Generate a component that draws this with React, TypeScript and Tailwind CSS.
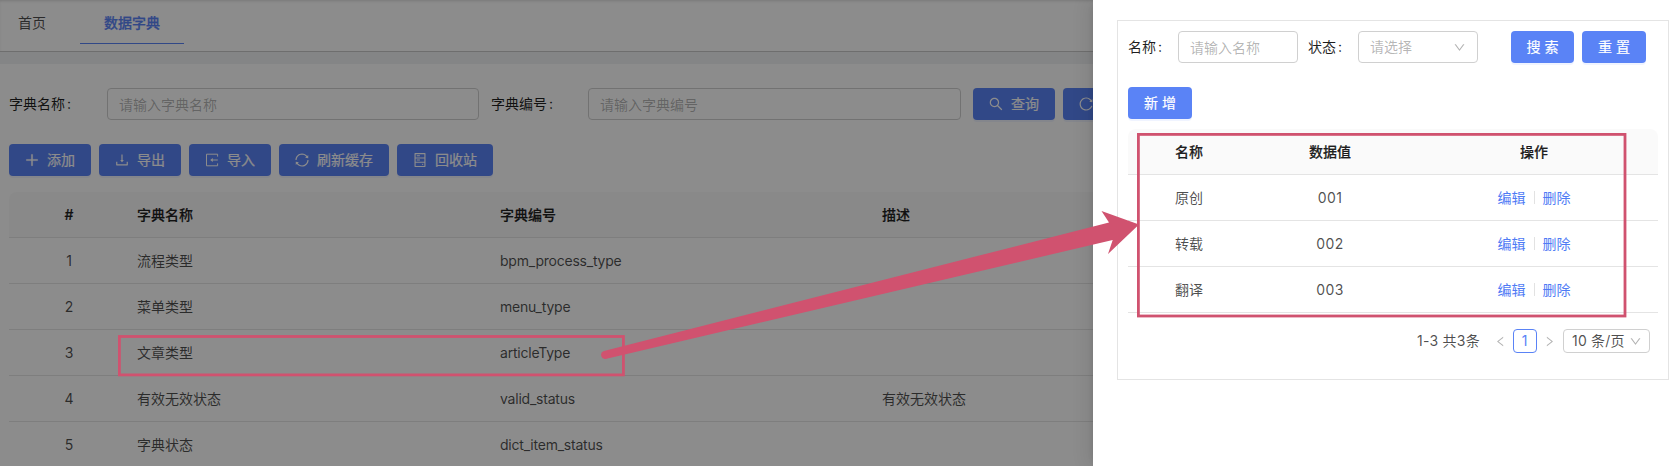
import React from "react";
import {
  AiOutlinePlus,
  AiOutlineDownload,
  AiOutlineSync,
  AiOutlineReload,
  AiOutlineHdd,
  AiOutlineSearch,
  AiOutlineDown,
  AiOutlineLeft,
  AiOutlineRight,
} from "react-icons/ai";

function ImportIcon() {
  return (
    <svg viewBox="0 0 14 14" width="14" height="14" fill="none" stroke="currentColor">
      <path d="M12.6 3.6V1.2H1.5v11.6h11.1v-2.4" />
      <path d="M12.8 7H7" />
      <path d="M5.2 7l2.6-2v4z" fill="currentColor" stroke="none" />
    </svg>
  );
}

const primary =
  "flex h-8 shrink-0 items-center justify-center rounded bg-[#5a83f6] text-white shadow-[0_2px_0_rgba(5,60,255,0.06)] [-webkit-text-stroke:0.2px]";

function IconButton({ icon, label }: { icon: React.ReactNode; label: string }) {
  return (
    <button className={`${primary} gap-2 px-4`}>
      <span className="flex w-[14px] justify-center text-[16px] [&>svg]:shrink-0">{icon}</span>
      <span>{label}</span>
    </button>
  );
}

function Label({ children }: { children: React.ReactNode }) {
  return (
    <span className="shrink-0 text-black/88">
      {children}
      <span className="ml-[2px]">:</span>
    </span>
  );
}

const rows = [
  ["1", "流程类型", "bpm_process_type", ""],
  ["2", "菜单类型", "menu_type", ""],
  ["3", "文章类型", "articleType", ""],
  ["4", "有效无效状态", "valid_status", "有效无效状态"],
  ["5", "字典状态", "dict_item_status", ""],
];

const items = [
  ["原创", "001"],
  ["转载", "002"],
  ["翻译", "003"],
];

function MainPage() {
  return (
    <div className="h-full w-full bg-white">
      <nav className="flex h-[52px] border-b border-[#c8c8c8] shadow-[inset_0_2px_3px_-1px_rgba(0,0,0,0.15)]">
        <div className="flex h-11 w-20 items-center pt-[2px] pl-[18px] text-black/70">首页</div>
        <div className="flex h-11 w-[104px] items-center justify-center border-b border-[#5a83f6] pt-[2px] font-medium text-[#5a83f6] [-webkit-text-stroke:0.25px]">
          数据字典
        </div>
      </nav>
      <div className="h-3 bg-[#f0f2f5]" />
      <div className="px-[9px] pt-6">
        <div className="flex h-8 items-center">
          <div className="w-[98px]">
            <Label>字典名称</Label>
          </div>
          <div className="flex h-8 w-[372px] items-center rounded border border-[#d0d0d0] px-[11px] pt-px text-black/30">
            请输入字典名称
          </div>
          <div className="ml-3 w-[97px]">
            <Label>字典编号</Label>
          </div>
          <div className="flex h-8 w-[373px] items-center rounded border border-[#d0d0d0] px-[11px] pt-px text-black/30">
            请输入字典编号
          </div>
          <div className="ml-3 flex gap-2">
            <IconButton icon={<AiOutlineSearch />} label="查询" />
            <IconButton icon={<AiOutlineReload />} label="重置" />
          </div>
        </div>
        <div className="mt-6 flex gap-2">
          <IconButton icon={<AiOutlinePlus size={16} strokeWidth={30} />} label="添加" />
          <IconButton icon={<AiOutlineDownload />} label="导出" />
          <IconButton icon={<ImportIcon />} label="导入" />
          <IconButton icon={<AiOutlineSync />} label="刷新缓存" />
          <IconButton icon={<AiOutlineHdd />} label="回收站" />
        </div>
        <div className="mt-4">
          <div className="grid h-[46px] grid-cols-[120px_363px_382px_1fr] items-center rounded-t-lg border-b border-[#e6e6e6] bg-[#fafafa] font-medium text-black/88 [-webkit-text-stroke:0.22px]">
            <span className="text-center">#</span>
            <span className="px-2">字典名称</span>
            <span className="px-2">字典编号</span>
            <span className="px-2">描述</span>
          </div>
          {rows.map((r) => (
            <div
              key={r[0]}
              className="grid h-[46px] grid-cols-[120px_363px_382px_1fr] items-center border-b border-[#e6e6e6] text-black/70"
            >
              <span className="text-center">{r[0]}</span>
              <span className="px-2">{r[1]}</span>
              <span className="px-2 tracking-[-0.22px]">{r[2]}</span>
              <span className="px-2">{r[3]}</span>
            </div>
          ))}
        </div>
      </div>
    </div>
  );
}

function Drawer() {
  return (
    <aside className="absolute inset-y-0 right-0 w-[582px] bg-white pt-5 pl-6 shadow-[-6px_0_16px_0_rgba(0,0,0,0.08),-3px_0_6px_-4px_rgba(0,0,0,0.12)]">
      <div className="h-[360px] w-[552px] border border-[#e4e4e4] px-[10px] pt-[10px]">
        <div className="flex h-8 items-center">
          <div className="w-[50px]">
            <Label>名称</Label>
          </div>
          <div className="flex h-8 w-[120px] items-center rounded border border-[#d0d0d0] px-[11px] pt-px text-black/30">
            请输入名称
          </div>
          <div className="ml-[10px] w-[50px]">
            <Label>状态</Label>
          </div>
          <div className="flex h-8 w-[120px] items-center justify-between rounded border border-[#d0d0d0] px-[11px] text-black/30">
            <span>请选择</span>
            <AiOutlineDown size={13} />
          </div>
          <button className={`${primary} ml-[33px] w-[63px]`}>搜 索</button>
          <button className={`${primary} ml-2 w-16`}>重 置</button>
        </div>
        <button className={`${primary} mt-6 w-16`}>新 增</button>
        <div className="mt-[10px] w-[530px]">
          <div className="grid h-[46px] grid-cols-[122px_160px_1fr] items-center rounded-t-lg border-b border-[#e4e4e4] bg-[#fafafa] text-center font-medium text-black/88 [-webkit-text-stroke:0.22px]">
            <span>名称</span>
            <span>数据值</span>
            <span>操作</span>
          </div>
          {items.map(([name, value]) => (
            <div
              key={value}
              className="grid h-[46px] grid-cols-[122px_160px_1fr] items-center border-b border-[#e4e4e4] text-center text-black/70"
            >
              <span>{name}</span>
              <span className="tracking-[0.4px]">{value}</span>
              <span className="flex items-center justify-center gap-2 text-[#4f7bf5]">
                <a>编辑</a>
                <i className="h-[13px] w-px bg-[#e2e2e2]" />
                <a>删除</a>
              </span>
            </div>
          ))}
        </div>
        <div className="mt-4 flex h-6 items-center justify-end pr-[8px] text-black/70">
          <span className="tracking-[0.25px]">1-3 共3条</span>
          <AiOutlineLeft size={13} className="ml-[14px] text-black/30" />
          <span className="mx-[6px] flex h-6 w-6 items-center justify-center rounded border border-[#5a83f6] pr-px text-[#5a83f6]">
            1
          </span>
          <AiOutlineRight size={13} className="text-black/30" />
          <span className="ml-[7px] flex h-6 w-[87px] items-center justify-between rounded border border-[#d0d0d0] pr-[7px] pl-2 tracking-[0.2px] whitespace-nowrap">
            10 条/页
            <AiOutlineDown size={13} className="text-black/30" />
          </span>
        </div>
      </div>
    </aside>
  );
}

function Annotations() {
  return (
    <svg className="absolute inset-0" width="1675" height="466" viewBox="0 0 1675 466">
      <g fill="none" stroke="#d0526f" strokeWidth="2.8">
        <rect x="119.4" y="336.5" width="504" height="38.4" />
        <rect x="1138.4" y="134.4" width="486.6" height="181.6" />
      </g>
      <path
        fill="#d0526f"
        d="M604 351L1109 222.5L1101.5 211L1139 224.5L1108 254L1112.7 240L606.5 358.8A4 4 0 0 1 604 351Z"
      />
    </svg>
  );
}

export default function App() {
  return (
    <div className="relative h-[466px] w-[1675px] overflow-hidden font-[Inter,'Noto_Sans_CJK_SC',sans-serif] text-[14px] leading-[22px]">
      <MainPage />
      <div className="absolute inset-0 bg-black/45" />
      <Drawer />
      <Annotations />
    </div>
  );
}
